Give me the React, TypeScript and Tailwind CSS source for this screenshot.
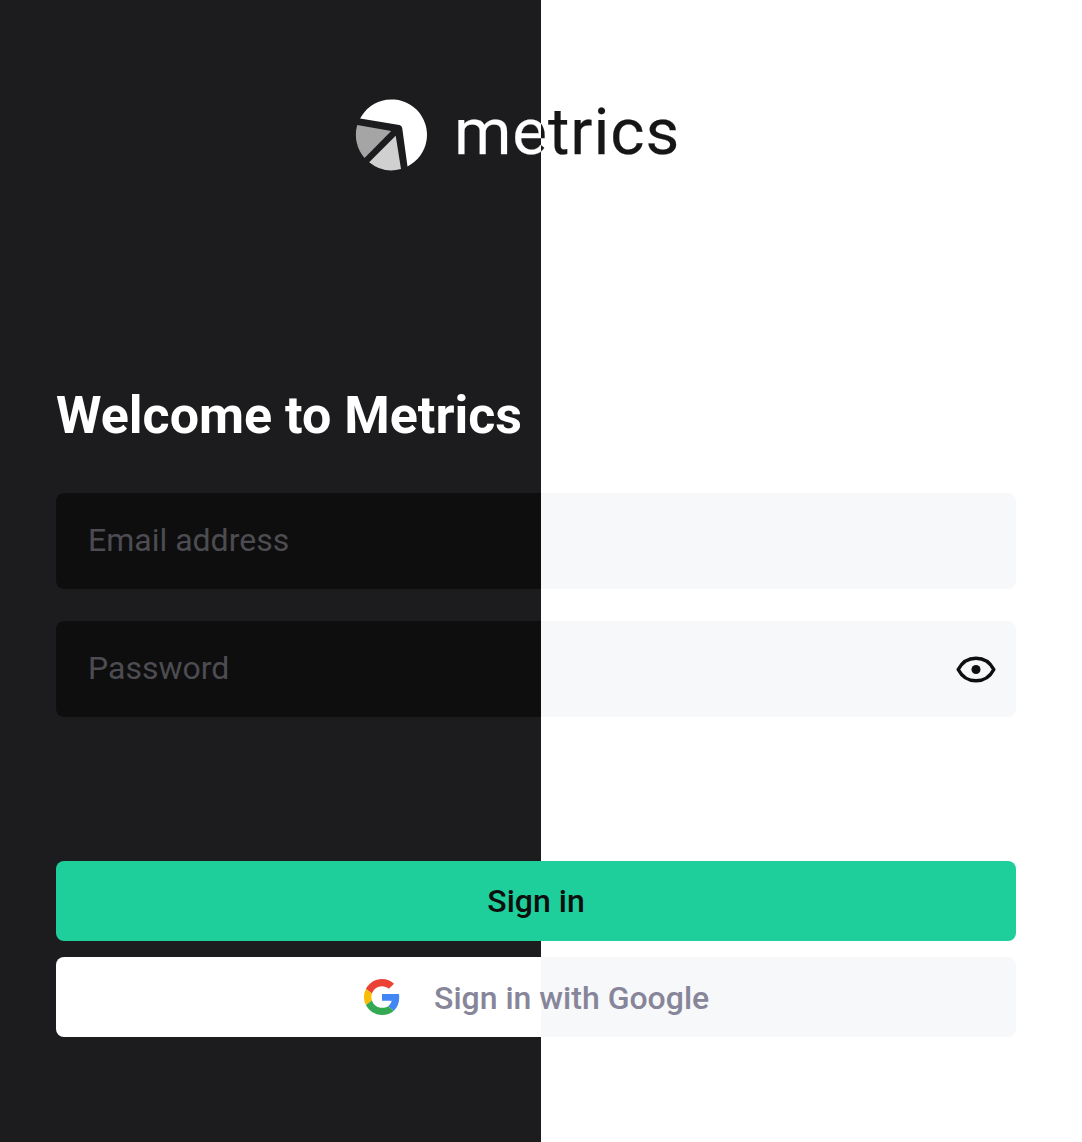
function Logo() {
  return (
    <svg className="h-[72px] w-[72px] shrink-0" viewBox="0 0 72 72" aria-hidden="true">
      <path d="M5.1 19.6 A35.4 35.4 0 1 1 52.5 67.4 L47.2 28.9 Q46.8 26.4 44.3 26 Z" fill="#fff" />
      <path d="M2.2 26.1 L36.2 31.9 L9.5 58.9 A35.5 35.5 0 0 1 2.2 26.1 Z" fill="#a5a5a5" />
      <path d="M40.7 36.8 L46 70.1 A35.5 35.5 0 0 1 14.2 63.2 Z" fill="#d0d0d0" />
    </svg>
  );
}

function EyeIcon() {
  return (
    <svg className="h-10 w-10" viewBox="0 0 40 40" fill="none" aria-hidden="true">
      <path
        d="M2.2 20.5 C6 13.2 12.6 9.2 20 9.2 C27.4 9.2 34 13.2 37.8 20.5 C34 27.8 27.4 31.8 20 31.8 C12.6 31.8 6 27.8 2.2 20.5 Z"
        stroke="#0f0f0f"
        strokeWidth="3.5"
        strokeLinejoin="round"
      />
      <circle cx="20" cy="20.5" r="4.5" fill="#0f0f0f" />
    </svg>
  );
}

function GoogleIcon() {
  return (
    <svg className="h-9 w-9" viewBox="0 0 48 48" aria-hidden="true">
      <path fill="#EA4335" d="M24 9.5c3.54 0 6.71 1.22 9.21 3.6l6.85-6.85C35.9 2.38 30.47 0 24 0 14.62 0 6.51 5.38 2.56 13.22l7.98 6.19C12.43 13.72 17.74 9.5 24 9.5z" />
      <path fill="#4285F4" d="M46.98 24.55c0-1.57-.15-3.09-.38-4.55H24v9.02h12.94c-.58 2.96-2.26 5.48-4.78 7.18l7.73 6c4.51-4.18 7.09-10.36 7.09-17.65z" />
      <path fill="#FBBC05" d="M10.53 28.59c-.48-1.45-.76-2.99-.76-4.59s.27-3.14.76-4.59l-7.98-6.19C.92 16.46 0 20.12 0 24c0 3.88.92 7.54 2.56 10.78l7.97-6.19z" />
      <path fill="#34A853" d="M24 48c6.48 0 11.93-2.13 15.89-5.81l-7.73-6c-2.15 1.45-4.92 2.3-8.16 2.3-6.26 0-11.57-4.22-13.47-9.91l-7.98 6.19C6.51 42.62 14.62 48 24 48z" />
    </svg>
  );
}

const field =
  "flex h-24 items-center justify-between rounded-lg bg-[linear-gradient(to_right,#0e0e0e_485px,#f7f8fa_485px)] pl-8 pr-5";

export default function App() {
  return (
    <main className="flex h-[1142px] w-[1082px] flex-col overflow-hidden bg-[linear-gradient(to_right,#1c1c1e_541px,#fff_541px)] pl-14 pr-[66px] pt-[99px] font-['Roboto',sans-serif]">
      <header className="flex h-[72px] items-center pl-[299px]">
        <Logo />
        <span className="ml-[27px] mt-[-7px] bg-[linear-gradient(to_right,#fff_87px,#161616_87px)] bg-clip-text text-[65.5px] leading-[80px] tracking-[0.9px] text-transparent [-webkit-text-stroke:0.25px_transparent]">
          metrics
        </span>
      </header>

      <h1 className="mt-[213px] text-[52px] leading-[64px] font-bold text-white">Welcome to Metrics</h1>

      <form className="mt-[45px] flex flex-col" onSubmit={(e) => e.preventDefault()}>
        <div className={field}>
          <span className="mb-0.5 text-[32px] leading-10 text-[#4c4c52]">Email address</span>
        </div>
        <div className={field + " mt-8"}>
          <span className="mb-0.5 text-[32px] leading-10 text-[#4c4c52]">Password</span>
          <button type="button" aria-label="Show password">
            <EyeIcon />
          </button>
        </div>
        <button className="mt-36 flex h-20 items-center justify-center rounded-lg bg-[#1ecf9b] text-[32px] leading-10 font-medium text-[#0e0e0e]">
          Sign in
        </button>
        <button
          type="button"
          className="mt-4 flex h-20 items-center rounded-lg bg-[linear-gradient(to_right,#fff_485px,#f7f8fa_485px)] pl-[308px] text-[32px] leading-10 font-medium text-[#878599]"
        >
          <GoogleIcon />
          <span className="ml-[34px] mt-0.5">Sign in with Google</span>
        </button>
      </form>
    </main>
  );
}
